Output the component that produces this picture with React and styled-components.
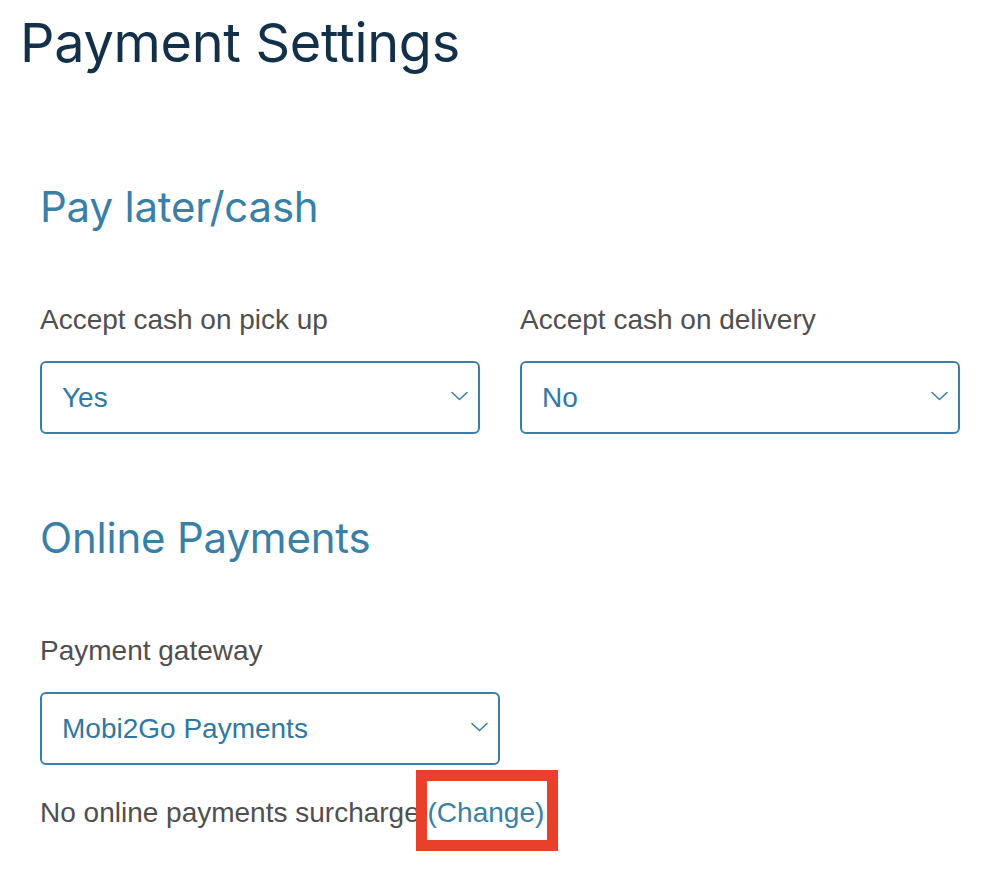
import React from 'react'
import styled, { createGlobalStyle } from 'styled-components'

const GlobalStyle = createGlobalStyle`
  body {
    margin: 0;
    background: #ffffff;
    font-family: "Liberation Sans", Arial, sans-serif;
  }
`

const Chevron = () => (
  <svg width="17" height="10" viewBox="0 0 17 10" fill="none">
    <path d="M1 1.5L8.5 8.5L16 1.5" stroke="#3a7fa7" strokeWidth="1.6" strokeLinecap="round" strokeLinejoin="round" />
  </svg>
)

const App = () => {
  return (
    <Page>
      <GlobalStyle />
      <Title>Payment Settings</Title>

      <Section>
        <SectionTitle>Pay later/cash</SectionTitle>
        <FieldRow>
          <Field>
            <Label>Accept cash on pick up</Label>
            <SelectBox>
              <span>Yes</span>
              <Chevron />
            </SelectBox>
          </Field>
          <Field>
            <Label>Accept cash on delivery</Label>
            <SelectBox>
              <span>No</span>
              <Chevron />
            </SelectBox>
          </Field>
        </FieldRow>
      </Section>

      <Section $gap={79}>
        <SectionTitle>Online Payments</SectionTitle>
        <Field>
          <Label>Payment gateway</Label>
          <SelectBox $width={460}>
            <span>Mobi2Go Payments</span>
            <Chevron />
          </SelectBox>
        </Field>
        <Note>
          No online payments surcharge <ChangeLink href="#">(Change)</ChangeLink>
        </Note>
      </Section>
    </Page>
  )
}

export default App

const Page = styled.div`
  width: 984px;
  height: 886px;
  box-sizing: border-box;
  padding: 11px 24px 0 20px;
`

const Title = styled.h1`
  margin: 0;
  font-family: Inter, "Noto Sans", sans-serif;
  font-size: 54px;
  line-height: 64px;
  font-weight: 400;
  color: #13304a;
  letter-spacing: -0.3px;
`

const Section = styled.section`
  padding-left: 20px;
  margin-top: ${p => p.$gap || 107}px;
`

const SectionTitle = styled.h2`
  margin: 0;
  font-family: Inter, "Noto Sans", sans-serif;
  font-size: 42px;
  line-height: 50px;
  font-weight: 400;
  color: #3a7fa7;
  letter-spacing: -0.2px;
`

const FieldRow = styled.div`
  display: grid;
  grid-template-columns: 440px 440px;
  column-gap: 40px;
`

const Field = styled.div`
  display: flex;
  flex-direction: column;
  margin-top: 72px;
`

const Label = styled.label`
  font-size: 28px;
  line-height: 32px;
  color: #4f4f4f;
`

const SelectBox = styled.div`
  margin-top: 25px;
  width: ${p => p.$width || 440}px;
  height: 73px;
  box-sizing: border-box;
  border: 2px solid #3a7fa7;
  border-radius: 6px;
  display: flex;
  align-items: center;
  justify-content: space-between;
  padding: 0 10px 0 20px;
  font-size: 28px;
  color: #2f79a2;

  svg {
    margin-top: -3px;
  }
`

const Note = styled.p`
  margin: 32px 0 0;
  font-size: 28px;
  line-height: 32px;
  color: #4f4f4f;
`

const ChangeLink = styled.a`
  position: relative;
  color: #3a7fa7;
  text-decoration: none;

  &::after {
    content: '';
    position: absolute;
    top: -27px;
    bottom: -23px;
    left: -12px;
    right: -14px;
    border: 11px solid #e8402a;
  }
`
